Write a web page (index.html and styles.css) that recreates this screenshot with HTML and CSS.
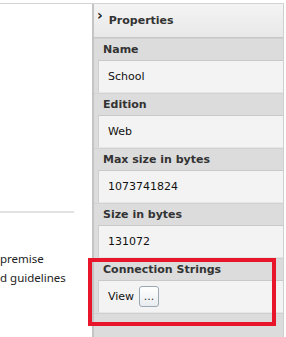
FILE: index.html
```html
<!DOCTYPE html>
<html lang="en">
<head>
    <meta charset="UTF-8">
    <title>Properties</title>
    <link rel="stylesheet" href="styles.css">
</head>
<body>
    <div class="page">
        <div class="side">
            <div class="side-rule"></div>
            <p class="side-text">premise<br>d guidelines</p>
        </div>
        <div class="panel">
            <div class="panel-header">
                <span class="arrow">&#8250;</span>
                <span class="panel-title">Properties</span>
            </div>
            <div class="prop">
                <div class="prop-label">Name</div>
                <div class="prop-value">School</div>
            </div>
            <div class="prop">
                <div class="prop-label">Edition</div>
                <div class="prop-value">Web</div>
            </div>
            <div class="prop">
                <div class="prop-label">Max size in bytes</div>
                <div class="prop-value">1073741824</div>
            </div>
            <div class="prop">
                <div class="prop-label">Size in bytes</div>
                <div class="prop-value">131072</div>
            </div>
            <div class="prop">
                <div class="prop-label">Connection Strings</div>
                <div class="prop-value">View <button class="more">...</button></div>
            </div>
            <div class="panel-foot"></div>
            <div class="highlight"></div>
        </div>
    </div>
</body>
</html>
```
FILE: styles.css
```css
body {
    margin: 0;
    background-color: white;
    font-family: "DejaVu Sans", Verdana, sans-serif;
    font-size: 11px;
    color: #111;
}
.page {
    display: flex;
    width: 284px;
    height: 337px;
    border-top: 1px solid #d4d4d4;
    margin-top: 3px;
    box-sizing: border-box;
}
.side {
    width: 92px;
    flex-shrink: 0;
}
.side-rule {
    width: 74px;
    height: 2px;
    background-color: #e2e2e2;
    margin-top: 207px;
}
.side-text {
    margin: 36px 0 0 0;
    font-family: "Noto Sans", "Open Sans", sans-serif;
    font-size: 11.5px;
    line-height: 19px;
    color: #222;
}
.panel {
    position: relative;
    flex: 1;
    background-color: #dcdcdc;
    border-left: 2px solid #c4c4c4;
    border-right: 1px solid #cfcfcf;
}
.panel-header {
    height: 33px;
    display: flex;
    align-items: center;
    gap: 6px;
    padding-left: 3px;
    background: linear-gradient(#f4f4f4, #e8e8e8);
    border-bottom: 1px solid #c6c6c6;
}
.arrow {
    font-weight: bold;
    font-size: 14px;
    margin-top: -12px;
    color: #222;
}
.panel-title {
    font-weight: bold;
    color: #333;
    margin-top: -1px;
}
.prop-label {
    height: 21px;
    line-height: 21px;
    padding-left: 9px;
    font-weight: bold;
    color: #333;
    border-top: 1px solid #d2d2d2;
}
.prop-value {
    height: 31px;
    margin-left: 4px;
    padding-left: 9px;
    display: flex;
    align-items: center;
    gap: 5px;
    background-color: #f3f3f3;
    border-top: 1px solid #c9c9c9;
    border-left: 1px solid #cfcfcf;
    border-bottom: 1px solid #e6e6e6;
}
.more {
    width: 20px;
    height: 21px;
    padding: 0;
    font-family: inherit;
    font-size: 11px;
    line-height: 14px;
    color: #333;
    background: linear-gradient(#ffffff, #e9ecef);
    border: 1px solid #9aa7b4;
    border-radius: 3px;
}
.panel-foot {
    height: 14px;
    border-top: 1px solid #cfcfcf;
}
.highlight {
    position: absolute;
    left: -6px;
    top: 254px;
    width: 188px;
    height: 68px;
    border: 4px solid #e8152b;
    box-sizing: border-box;
}
```
